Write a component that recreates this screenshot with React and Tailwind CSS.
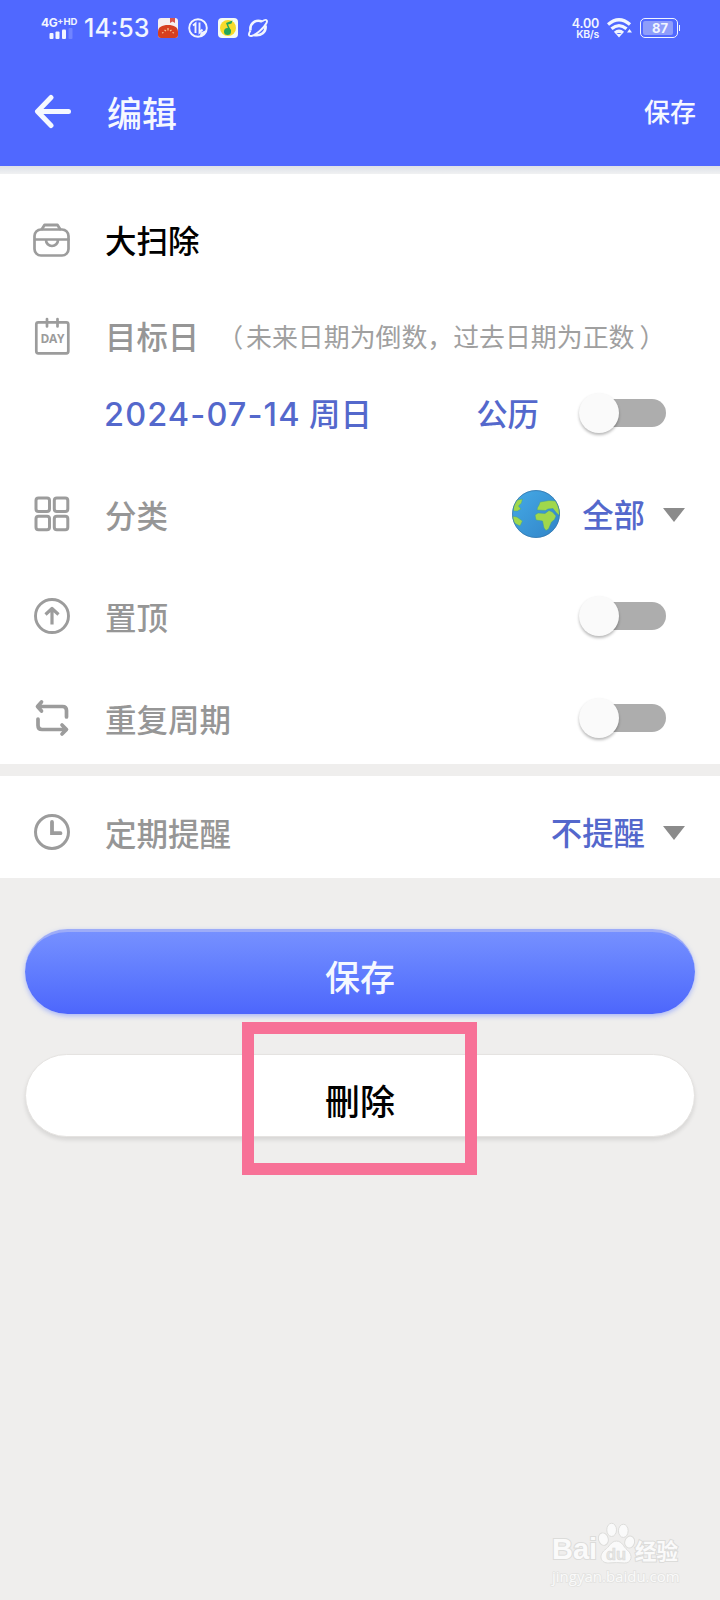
import React from "react";

const Icon = ({ children }) => (
  <svg
    className="h-10 w-10 shrink-0"
    viewBox="0 0 40 40"
    fill="none"
    stroke="#9c9c9c"
    strokeWidth="3"
    strokeLinecap="round"
    strokeLinejoin="round"
  >
    {children}
  </svg>
);

const BagIcon = () => (
  <Icon>
    <path d="M10 9L12.500 5H25.500L28 9" strokeWidth="2.800" />
    <rect x="2.500" y="9.500" width="34" height="26" rx="6.500" strokeWidth="2.700" />
    <path d="M3 19.500H36.500M14 20A6 6 0 0 0 26 20" strokeWidth="2.700" />
  </Icon>
);

const DayIcon = () => (
  <Icon>
    <rect x="4.300" y="6.300" width="32" height="31" rx="2" strokeWidth="2.700" />
    <path d="M15 3V10.500M25.500 3V10.500" strokeWidth="2.700" />
    <text
      x="20.500"
      y="27.200"
      textAnchor="middle"
      textLength="24"
      className="font-['Open_Sans',sans-serif] text-[12px] font-bold"
      fill="#9c9c9c"
      stroke="none"
    >
      DAY
    </text>
  </Icon>
);

const GridIcon = () => (
  <Icon>
    <rect x="4" y="4" width="13.500" height="13.500" rx="2.500" />
    <rect x="22.300" y="4" width="13.500" height="13.500" rx="2.500" />
    <rect x="4" y="22.300" width="13.500" height="13.500" rx="2.500" />
    <rect x="22.300" y="22.300" width="13.500" height="13.500" rx="2.500" />
  </Icon>
);

const TopIcon = () => (
  <Icon>
    <circle cx="20" cy="20" r="16.500" strokeWidth="2.900" />
    <path d="M20 28.500V12.500M13.500 18.500L20 12.500L26.500 18.500" strokeLinecap="butt" strokeWidth="3.200" />
  </Icon>
);

const RepeatIcon = () => (
  <Icon>
    <path
      d="M9.500 4L5.500 8.500L9.500 13M6 8.500H30.500Q34.500 8.500 34.500 12.500V19M6 21V27.500Q6 31.500 10 31.500H33M30 27L34.500 31.500L30 36"
      strokeWidth="3.700"
    />
  </Icon>
);

const ClockIcon = () => (
  <Icon>
    <circle cx="20" cy="20" r="16.500" />
    <path d="M20 10V21.200H28.500" strokeWidth="3.800" strokeLinejoin="miter" />
  </Icon>
);

const Earth = () => (
  <svg className="h-12 w-12" viewBox="0 0 48 48">
    <defs>
      <linearGradient id="sea" x1="0" y1="0" x2="1" y2="1">
        <stop offset="0" stopColor="#45aae6" />
        <stop offset="1" stopColor="#3184c8" />
      </linearGradient>
      <clipPath id="globe">
        <circle cx="24" cy="24" r="23.700" />
      </clipPath>
    </defs>
    <circle cx="24" cy="24" r="23.700" fill="url(#sea)" />
    <g clipPath="url(#globe)" fill="#a0d84c" stroke="#3e9c9a" strokeWidth="0.500">
      <path d="M28 12L37 10.500L44.500 11L48 17L48 26L45 23.500L41 18.500L36 19L33.500 20.500L25 20L25.500 17.500L27 15Z" />
      <path d="M23 25L26 23L33 23.500L37 20.500L40.500 22L44 26L42.500 29.500L39.500 32L36.500 39L34 40.500L32 38L30.500 31L24 30Z" />
      <path d="M5 10L10.500 9L9.500 13L6.500 16L9 19L5.500 21L1.500 21L1 14Z" />
      <path d="M0 26L5 27L10.500 31L8 36L4 34L0 31Z" />
    </g>
    <circle cx="24" cy="24" r="23.500" fill="none" stroke="#3577ad" strokeWidth="0.800" />
  </svg>
);

const Caret = () => (
  <svg className="ml-[18px] mt-[2px] h-[14px] w-[22px]" viewBox="0 0 22 14">
    <path d="M0 0H22L11 14Z" fill="#8b8b8b" />
  </svg>
);

const Toggle = () => (
  <button className="flex h-7 w-[84px] items-center rounded-full bg-[#adadad]">
    <span className="-ml-[3px] h-10 w-10 shrink-0 rounded-full bg-[#fafafa] shadow-[0_2px_3px_rgba(0,0,0,0.28)]" />
  </button>
);

const Row = ({ icon, label, className = "", children }) => (
  <div className={`flex h-[102px] shrink-0 items-center pl-8 ${className}`}>
    {icon}
    <span className="ml-[33px] pt-[1px] text-[31.500px] font-medium text-[#969696]">{label}</span>
    <div className="ml-auto flex items-center">{children}</div>
  </div>
);

const StatusBar = () => (
  <div className="flex h-14 items-center pl-[41px] pr-10 font-['Inter',sans-serif] text-[#f1f5ff]">
    <div className="flex w-[38px] flex-col items-start">
      <div className="flex h-[11px] items-start whitespace-nowrap font-bold leading-[11px]">
        <span className="text-[12px] tracking-[-0.400px]">4G</span>
        <span className="-mt-[2px] text-[9px]">+</span>
        <span className="-mt-[1px] text-[9.500px]">HD</span>
      </div>
      <svg className="ml-2 h-[11px] w-6" viewBox="0 0 24 11" fill="currentColor">
        <rect x="0.500" y="5" width="4" height="6" rx="1" />
        <rect x="6.500" y="3.500" width="4" height="7.500" rx="1" />
        <rect x="13" y="1.500" width="4" height="9.500" rx="1" />
        <rect x="19.500" y="0" width="4" height="11" rx="1" opacity="0.200" />
      </svg>
    </div>
    <span className="ml-[5px] w-[66px] whitespace-nowrap text-[25px] font-medium leading-none">
      14:53
    </span>
    <svg className="ml-2 h-5 w-5" viewBox="0 0 20 20">
      <rect width="20" height="20" rx="3" fill="#f6efef" />
      <path d="M12 0H17V5L14.500 3.500L12 5Z" fill="#d8544d" />
      <path d="M0 14C0 9 4 7 10 7S20 9 20 14V17Q20 20 17 20H3Q0 20 0 17Z" fill="#d63f20" />
      <path d="M6.500 12L8 13M10 10V12.500M13.500 12L12 13M4 15L5.500 14.500M16 15L14.500 14.500" stroke="#f8c999" strokeWidth="1.200" />
    </svg>
    <svg className="ml-[10px] h-5 w-5" viewBox="0 0 20 20" fill="none" stroke="currentColor" strokeWidth="1.900">
      <circle cx="10" cy="10" r="8.800" />
      <path d="M5 7.500L7.500 5.500V15M11.500 4.500V14.500L14.500 11.500" />
      <path d="M12 18L12.500 14.500L18.500 12L17.500 15L14 18Z" fill="currentColor" stroke="none" />
    </svg>
    <svg className="ml-[10px] h-5 w-5" viewBox="0 0 20 20">
      <rect width="20" height="20" rx="4" fill="#f5fbf4" />
      <circle cx="10" cy="10" r="8" fill="#f7db2b" />
      <circle cx="9.500" cy="13.500" r="3.500" fill="#22a65a" />
      <path d="M11.500 14L8 5L14.500 2.500L13.500 5.500L10 6.500L13 13Z" fill="#22a65a" />
    </svg>
    <svg className="ml-[10px] h-5 w-5" viewBox="0 0 20 20" fill="none" stroke="currentColor" strokeWidth="2.600">
      <path d="M2.500 12.500C1.500 5 8 1 14 3.500M17.500 7.500C18.500 14 13 18.500 6 17" />
      <path d="M14 3.500C18 .5 20 2 18.500 5C16 10 8 17 3.500 18C0 18.500 .5 15.500 2.500 12.500" strokeWidth="1.900" />
    </svg>

    <div className="ml-auto flex flex-col items-end font-semibold leading-[10px]">
      <span className="mt-[2px] text-[12.500px] tracking-[-0.200px]">4.00</span>
      <span className="mt-[1px] text-[10.500px] leading-[10px] tracking-[-0.300px]">KB/s</span>
    </div>
    <svg className="ml-2 h-5 w-[26px]" viewBox="0 0 26 20" fill="none" stroke="currentColor" strokeWidth="3.300">
      <path d="M1 6.500Q12 -3 23 6.500M4.500 10.800Q12 4.500 19.500 10.800M8 15Q12 11.500 16 15" />
      <path d="M9 16H15L12 19.500Z" fill="currentColor" stroke="none" />
      <path d="M20 14.500L22.500 11L25 14.500Z" fill="currentColor" stroke="none" />
    </svg>
    <div className="ml-[7px] flex items-center">
      <div className="flex h-5 w-[38px] rounded-[5px] border-[1.500px] border-current p-[2px]">
        <span className="flex w-[30px] items-center justify-center rounded-[2px] bg-[#8e9dfb] pl-1 text-[13px] font-bold leading-none">
          87
        </span>
      </div>
      <span className="ml-[1px] h-[6px] w-[1px] bg-current" />
    </div>
  </div>
);

const Watermark = () => (
  <div className="mt-auto mr-[34px] mb-4 flex w-[134px] flex-col self-end text-[#fafafa]">
    <div className="flex h-[43px] items-end">
      <span className="w-[46px] pb-[3px] text-[29px] font-bold leading-[25px] font-['Liberation_Sans',sans-serif] [-webkit-text-stroke:2px_#dcdcda] [paint-order:stroke]">
        Bai
      </span>
      <svg className="h-[43px] w-[37px] shrink-0" viewBox="0 0 38 43" fill="#fafafa" stroke="#dcdcda">
        <ellipse cx="5.500" cy="17" rx="5" ry="6.500" transform="rotate(-15 5.500 17)" />
        <ellipse cx="14" cy="7.500" rx="5" ry="6.800" />
        <ellipse cx="26" cy="8.500" rx="5" ry="6.800" />
        <ellipse cx="32.500" cy="20" rx="5" ry="6.200" transform="rotate(15 32.500 20)" />
        <path d="M19 19C25 19 26 25 30 28C37 34 34 42 27 41.500C22 41 16 41 11 41.500C3 42 0 34 7 28C12 25 13 19 19 19Z" />
        <text
          x="18.500"
          y="38"
          textAnchor="middle"
          className="font-['Liberation_Sans',sans-serif] text-[17px] font-bold"
          fill="#e6e6e4"
          stroke="#d8d8d6"
          strokeWidth="0.500"
        >
          du
        </text>
      </svg>
      <span className="whitespace-nowrap pb-[3px] text-[21.500px] font-bold leading-[25px] [-webkit-text-stroke:2px_#dcdcda] [paint-order:stroke]">
        经验
      </span>
    </div>
    <span className="mt-[3px] whitespace-nowrap text-[15px] leading-4 font-['Open_Sans',sans-serif] [-webkit-text-stroke:1.500px_#e2e2e0] [paint-order:stroke]">
      jingyan.baidu.com
    </span>
  </div>
);

const App = () => {
  return (
    <main className="flex h-[1600px] w-[720px] flex-col overflow-hidden bg-[#efeeed] font-['Noto_Sans_CJK_SC',sans-serif]">
      <header className="h-[166px] shrink-0 bg-[#5068ff] text-[#f5f8ff]">
        <StatusBar />
        <div className="flex h-28 items-center pl-[34px] pr-6">
          <svg
            className="h-9 w-[38px]"
            viewBox="0 0 38 36"
            fill="none"
            stroke="currentColor"
            strokeWidth="5"
            strokeLinecap="round"
            strokeLinejoin="round"
          >
            <path d="M17 3.500L3.500 17.500L17 31.500M4 17.500H34.500" />
          </svg>
          <h1 className="ml-[35px] pb-[2px] text-[35px] font-medium leading-none">编辑</h1>
          <button className="ml-auto pb-[2px] text-[26px] font-medium leading-none">保存</button>
        </div>
      </header>
      <div className="h-2 shrink-0 bg-linear-to-b from-[#dde1e8] to-[#f0f1f2]" />

      <section className="flex h-[590px] shrink-0 flex-col bg-white pt-[15px]">
        <div className="flex h-[102px] shrink-0 items-center pl-8">
          <BagIcon />
          <span className="ml-[33px] text-[31.500px] font-medium text-black">大扫除</span>
        </div>
        <div className="flex h-[90px] shrink-0 items-center pl-8">
          <DayIcon />
          <span className="ml-[33px] text-[31.400px] font-medium text-[#969696]">目标日</span>
          <span className="ml-[18px] whitespace-nowrap text-[25.900px] text-[#a0a0a0]">
            <span className="mr-[3px]">（</span>
            未来日期为倒数，过去日期为正数
            <span className="ml-[5px]">）</span>
          </span>
        </div>
        <div className="mb-[18px] flex h-16 shrink-0 items-center pl-[104px] pr-[54px] font-medium text-[#5468cc]">
          <span className="w-[205px] whitespace-nowrap pt-[5px] font-['Inter',sans-serif] text-[32.500px] tracking-[1.100px]">
            2024-07-14
          </span>
          <span className="text-[31.400px]">周日</span>
          <span className="ml-auto mr-[43px] text-[31.400px]">公历</span>
          <Toggle />
        </div>
        <Row icon={<GridIcon />} label="分类" className="pr-[35px]">
          <Earth />
          <span className="ml-[22px] text-[31.400px] font-medium text-[#5468cc]">全部</span>
          <Caret />
        </Row>
        <Row icon={<TopIcon />} label="置顶" className="pr-[54px]">
          <Toggle />
        </Row>
        <Row icon={<RepeatIcon />} label="重复周期" className="pr-[54px]">
          <Toggle />
        </Row>
      </section>

      <section className="mt-3 h-[102px] shrink-0 bg-white pt-[5px]">
        <Row icon={<ClockIcon />} label="定期提醒" className="pr-[35px]">
          <span className="text-[31.400px] font-medium text-[#5468cc]">不提醒</span>
          <Caret />
        </Row>
      </section>

      <div className="mt-[51px] flex flex-col gap-10 px-[25px]">
        <button className="h-[85px] rounded-full border-t-[3px] border-[#9dacf8] bg-linear-to-b from-[#7690ff] to-[#4d66fc] pt-1 text-[35px] font-medium leading-none text-[#f5f8ff] shadow-[0_2px_5px_rgba(120,145,255,0.6)]">
          保存
        </button>
        <div className="relative flex">
          <button className="h-[83px] w-full rounded-full border border-[#e5e3e1] bg-white pt-2 text-[35px] font-medium leading-none text-black shadow-[0_3px_4px_rgba(0,0,0,0.1)]">
            刪除
          </button>
          <div className="absolute -top-8 left-[216.500px] h-[153px] w-[235px] border-[12px] border-[#f77197]" />
        </div>
      </div>
      <Watermark />
    </main>
  );
};

export default App;
